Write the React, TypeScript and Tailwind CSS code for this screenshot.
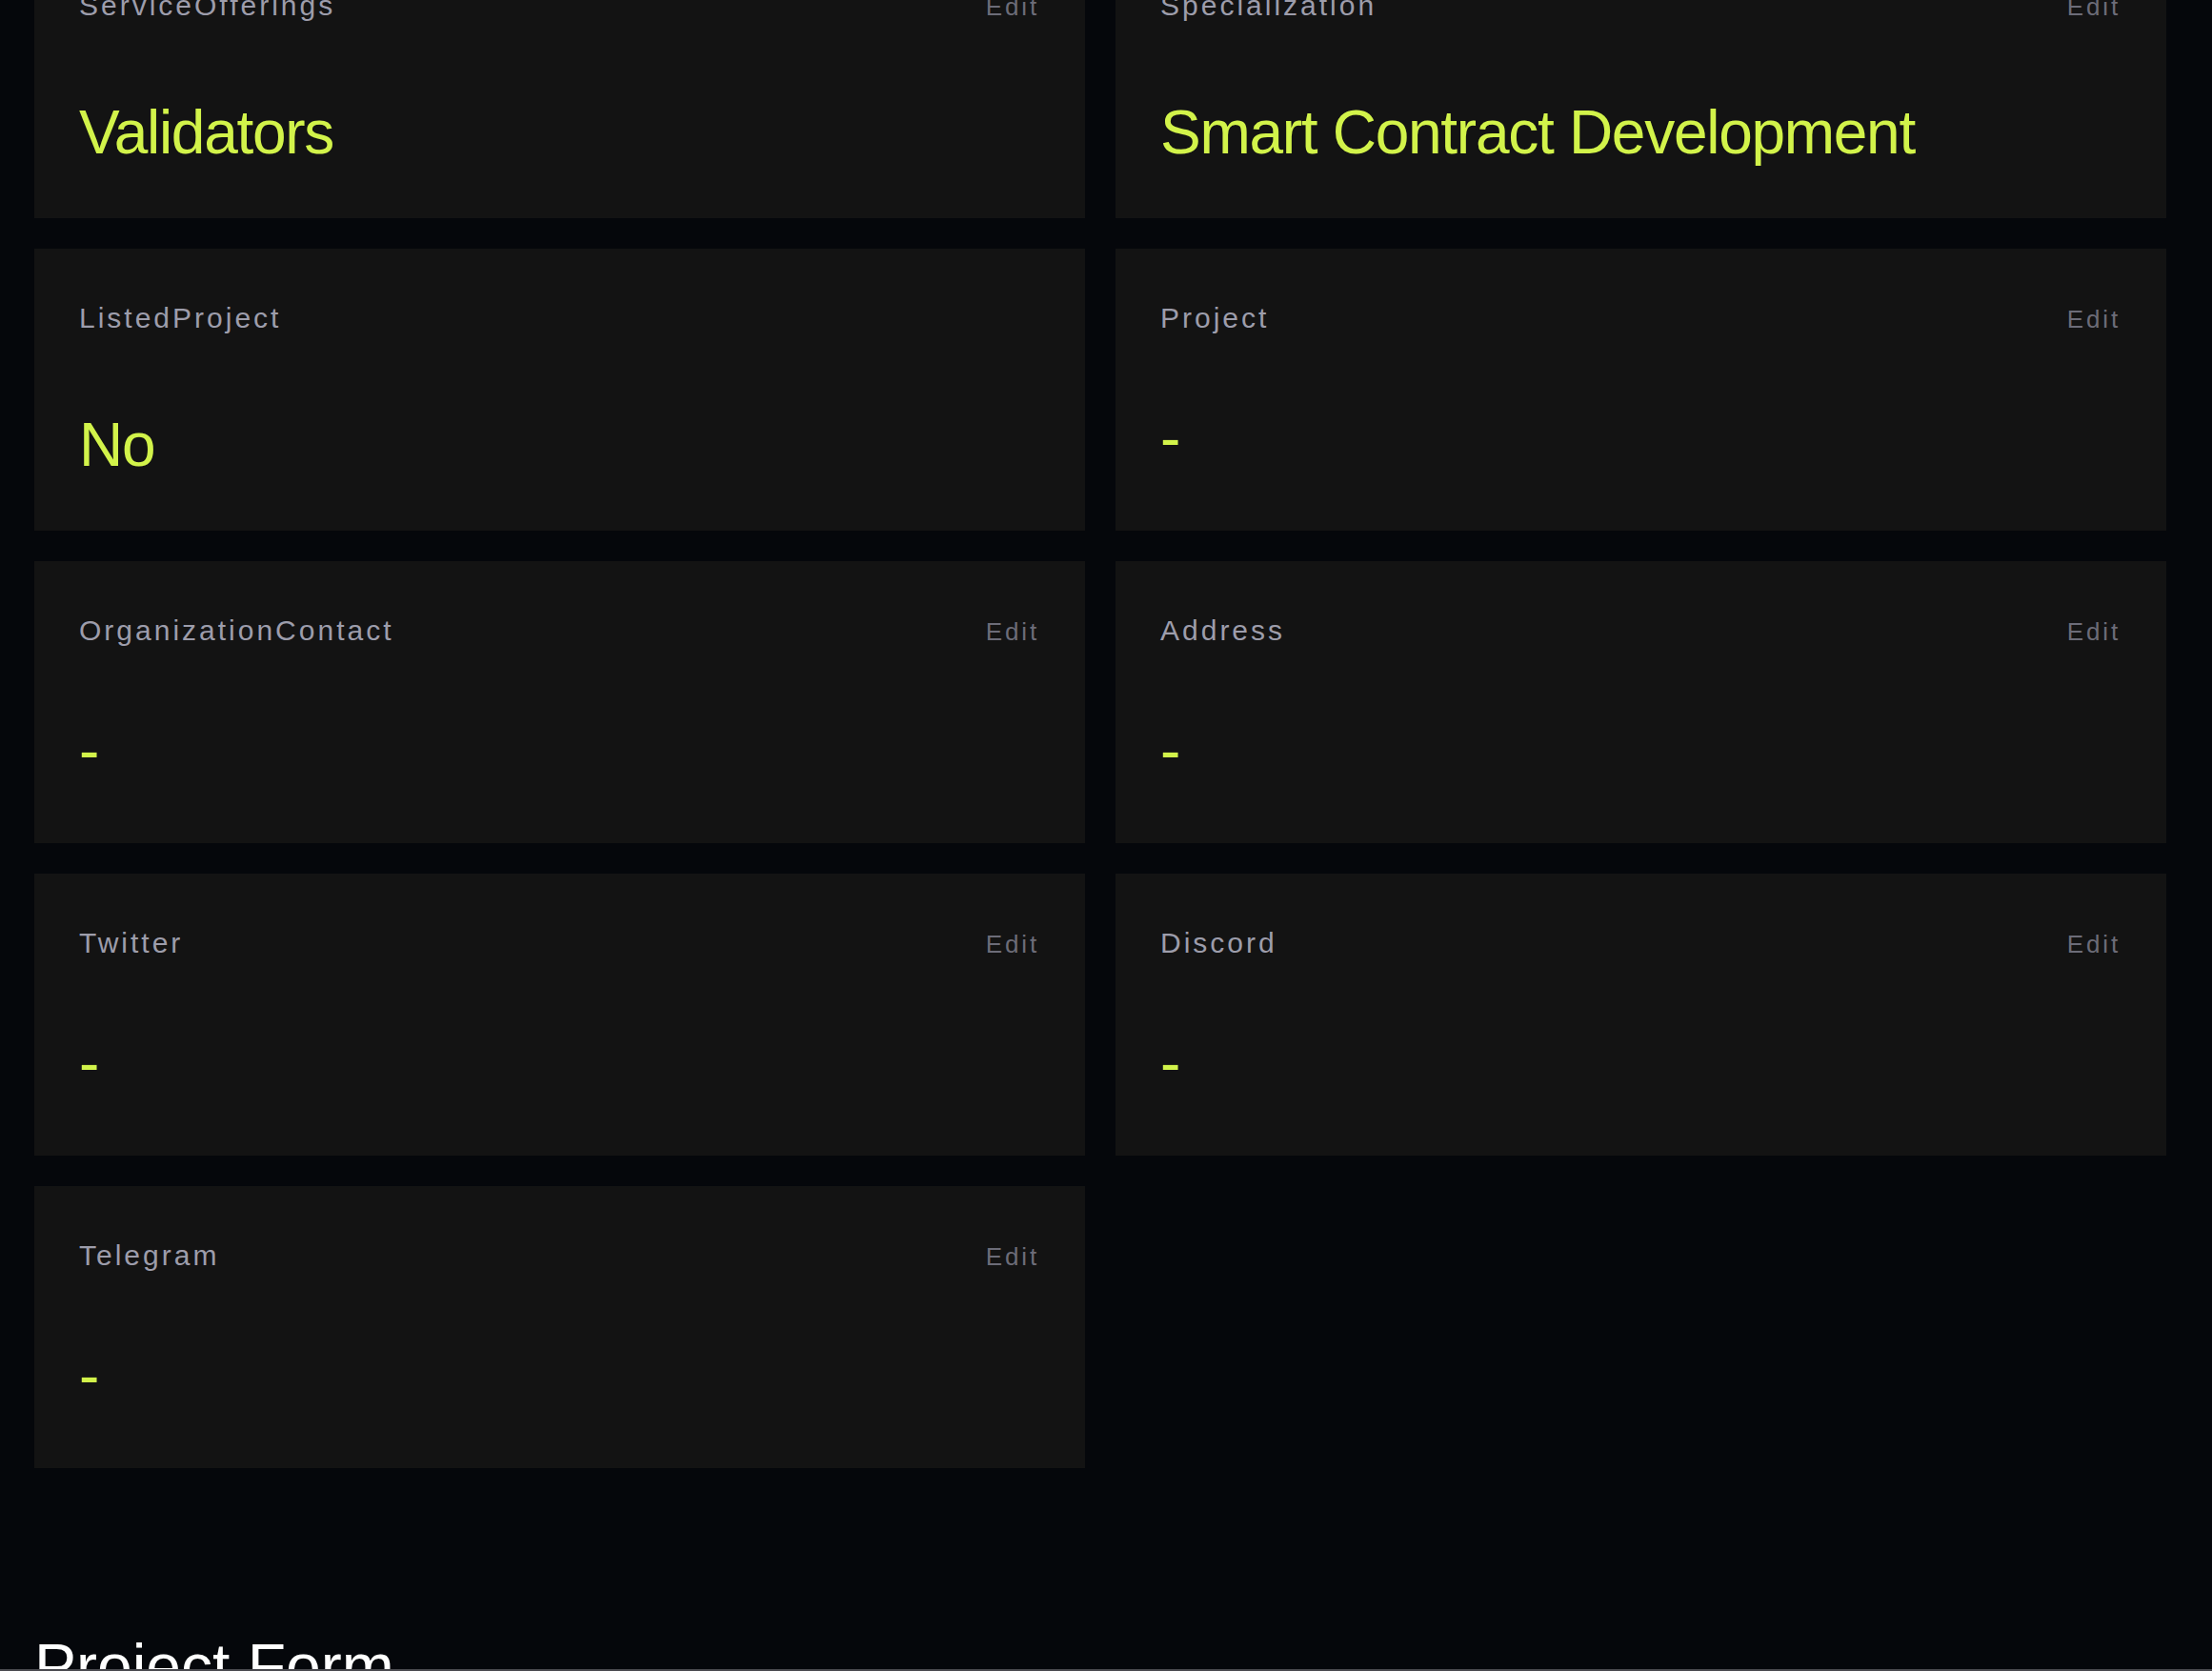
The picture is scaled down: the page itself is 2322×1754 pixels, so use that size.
import React from "react";

type Field = { label: string; value: string; edit: boolean };

const fields: Field[] = [
  { label: "ServiceOfferings", value: "Validators", edit: true },
  { label: "Specialization", value: "Smart Contract Development", edit: true },
  { label: "ListedProject", value: "No", edit: false },
  { label: "Project", value: "-", edit: true },
  { label: "OrganizationContact", value: "-", edit: true },
  { label: "Address", value: "-", edit: true },
  { label: "Twitter", value: "-", edit: true },
  { label: "Discord", value: "-", edit: true },
  { label: "Telegram", value: "-", edit: true },
];

function Card({ f }: { f: Field }) {
  const dash = f.value === "-";
  return (
    <div className="bg-[#131313] pt-[48px] pl-[47px] pr-[48px] flex flex-col h-[296px]">
      <div className="flex items-baseline justify-between h-[50px] leading-[50px]">
        <span className="text-[30px] tracking-[0.1em] text-[#9d9dab]">{f.label}</span>
        {f.edit && (
          <span className="text-[26px] leading-none tracking-[0.11em] text-[#6c6c78]">Edit</span>
        )}
      </div>
      <div
        className={
          dash
            ? "mt-[69px] text-[64px] leading-none text-[#d2f34a] whitespace-nowrap"
            : "mt-[76px] text-[64px] leading-none tracking-[-0.02em] text-[#d2f34a] whitespace-nowrap"
        }
      >
        {f.value}
      </div>
    </div>
  );
}

export default function App() {
  return (
    <div
      className="relative h-[1754px] overflow-hidden bg-[#05070b]"
      style={{ fontFamily: '"Liberation Sans", Arial, sans-serif' }}
    >
      <div className="-mt-[67px] pl-[36px] pr-[48px]">
        <div className="grid grid-cols-2 gap-[32px]">
          {fields.map((f) => (
            <Card key={f.label} f={f} />
          ))}
        </div>
        <h2 className="mt-[175px] text-[66px] leading-none text-white">Project Form</h2>
      </div>
      <div className="absolute bottom-0 left-0 right-0 h-[2px] bg-[#4a4a4f]" />
    </div>
  );
}
